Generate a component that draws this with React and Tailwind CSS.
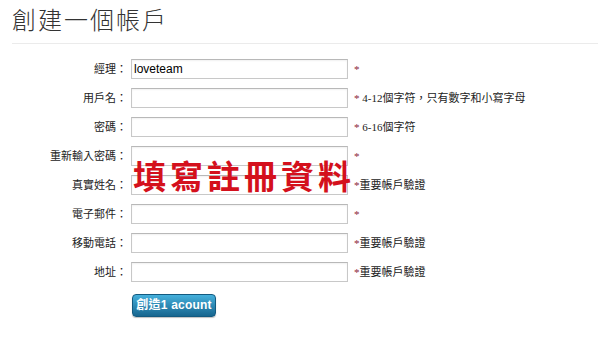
const fields = [
	{ label: "經理：", value: "loveteam", hint: "" },
	{ label: "用戶名：", hint: " 4-12個字符，只有數字和小寫字母" },
	{ label: "密碼：", hint: " 6-16個字符" },
	{ label: "重新輸入密碼：", hint: "" },
	{ label: "真實姓名：", hint: "重要帳戶驗證" },
	{ label: "電子郵件：", hint: "" },
	{ label: "移動電話：", hint: "重要帳戶驗證" },
	{ label: "地址：", hint: "重要帳戶驗證" },
];

function Row({ label, value, hint }) {
	return (
		<div className="flex items-center h-[20px]">
			<label className="w-[129px] pr-[2px] text-right text-[11px] text-[#222] whitespace-nowrap">{label}</label>
			<input
				readOnly
				value={value || ""}
				className="w-[217px] h-[20px] ml-[2px] border border-[#c8c8c8] border-t-[#b8b8b8] bg-white px-[2px] text-[12px] text-black shadow-[inset_0_1px_2px_rgba(0,0,0,0.06)] outline-none font-['Liberation_Sans',sans-serif]"
			/>
			<span className="ml-[6px] text-[11px] text-[#222] whitespace-nowrap font-['Liberation_Serif','Noto_Sans_CJK_TC',serif]">
				<span className="text-[#8b1c3a]">*</span>
				{hint}
			</span>
		</div>
	);
}

export default function App() {
	return (
		<div className="w-[600px] h-[349px] bg-white font-['Liberation_Sans','Noto_Sans_CJK_TC',sans-serif] overflow-hidden">
			<div className="pl-[12px] pt-[6px]">
				<h1 className="text-[24px] leading-[30px] font-light text-[#333] tracking-[2px]">創建一個帳戶</h1>
				<div className="mt-[7px] h-px bg-[#ebebeb] w-[586px]"></div>
			</div>

			<div className="relative mt-[15px] flex flex-col gap-[9px]">
				{fields.map((f, i) => (
					<Row key={i} {...f} />
				))}

				<div className="pl-[132px] pt-px">
					<button className="w-[84px] h-[23px] rounded-[4px] bg-gradient-to-b from-[#45b0dc] to-[#17668f] border border-[#135a80] text-white text-[12px] font-bold shadow-[0_1px_1px_rgba(0,0,0,0.25)] tracking-[0.2px]">
						創造1 acount
					</button>
				</div>

				<div className="absolute left-[133px] top-[96px] text-[33px] leading-[40px] font-bold text-[#d4101c] tracking-[4px] font-['Noto_Sans_CJK_TC',serif] pointer-events-none">
					填寫註冊資料
				</div>
			</div>
		</div>
	);
}
